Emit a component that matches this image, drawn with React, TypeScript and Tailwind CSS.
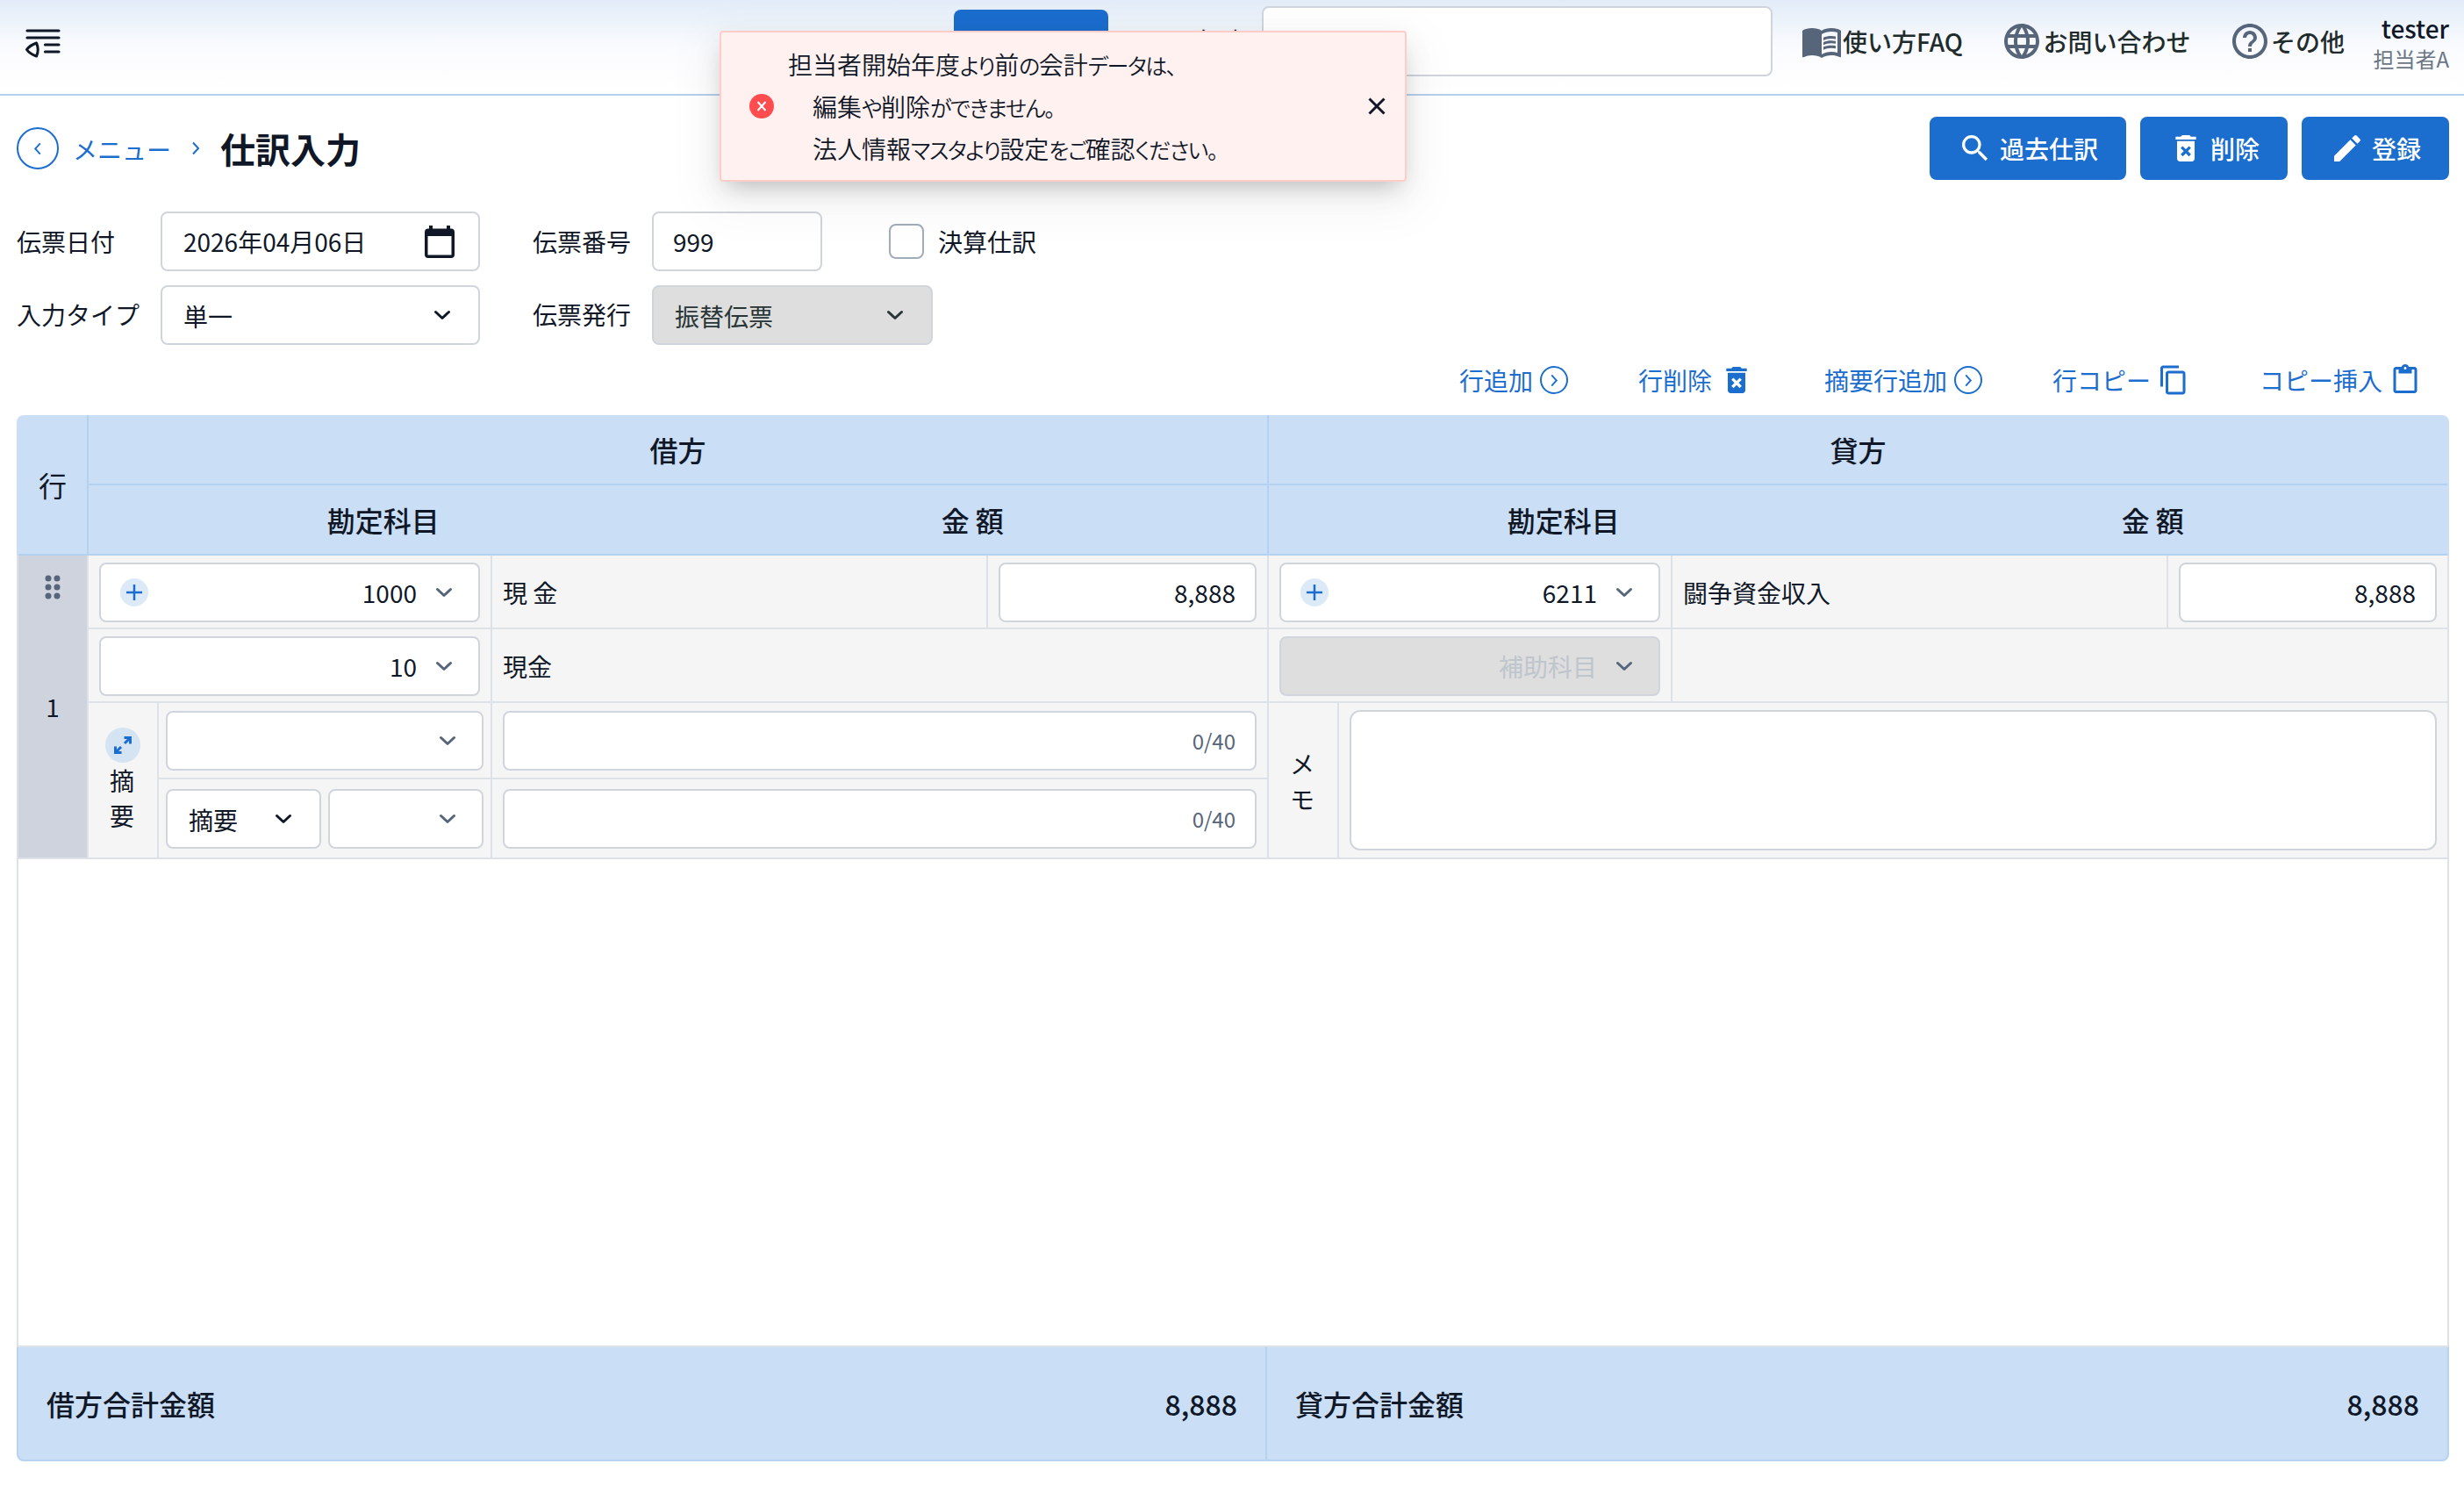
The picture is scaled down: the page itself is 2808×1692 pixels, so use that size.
import clsx from "clsx";
import type { ReactNode } from "react";
import {
  MdContentCopy,
  MdContentPaste,
  MdDeleteForever,
  MdEdit,
  MdHelpOutline,
  MdLanguage,
  MdMenuBook,
  MdSearch,
} from "react-icons/md";

type IconProps = { className?: string };

const ChevronDown = ({ className }: IconProps) => (
  <svg viewBox="0 0 20 12" className={clsx("h-3 w-5 shrink-0", className)} fill="none">
    <path d="M2.5 2.5 10 9.5l7.5-7" stroke="currentColor" strokeWidth="3" strokeLinecap="round" strokeLinejoin="round" />
  </svg>
);

const ChevronSide = ({ className }: IconProps) => (
  <svg viewBox="0 0 10 16" className={clsx("h-4 w-2.5 shrink-0", className)} fill="none">
    <path d="M2 1.5 8 8l-6 6.5" stroke="currentColor" strokeWidth="2" />
  </svg>
);

const FoldIcon = () => (
  <svg viewBox="0 0 40 34" className="h-[34px] w-10" fill="none" stroke="#101828" strokeWidth="3.2" strokeLinecap="round" strokeLinejoin="round">
    <path d="M2 2h36M2 10h36M22.5 18H38M22.5 26H38" />
    <path d="M12.5 16q3.5 7.500 0 15Q4.500 28 1.500 23.500 4.500 19 12.500 16Z" strokeWidth="3" />
  </svg>
);

const CalendarIcon = () => (
  <svg viewBox="0 0 34 37" className="h-[37px] w-[34px]" fill="#101828">
    <path
      fillRule="evenodd"
      d="M5 0h4v3.500h16V0h4v3.500h1a4 4 0 0 1 4 4V33a4 4 0 0 1-4 4H4a4 4 0 0 1-4-4V7.500a4 4 0 0 1 4-4h1V0ZM3.500 12v21.500h27V12Z"
    />
  </svg>
);

const CircleChevron = () => (
  <span className="flex size-8 items-center justify-center rounded-full border-2 border-[#1b6dce]">
    <ChevronSide className="h-[15px] w-2" />
  </span>
);

const ExpandIcon = () => (
  <svg viewBox="0 0 22 22" className="size-[22px]" fill="none" stroke="#1b6dce" strokeWidth="3">
    <path d="M12.500 2.500h7v7M19.500 2.500l-6.500 6.500M9.500 19.500h-7v-7M2.500 19.500 9 13" />
  </svg>
);

const DragDots = () => (
  <svg viewBox="0 0 18 28" className="h-7 w-[18px]" fill="#56657a">
    {[4, 14, 24].map((y) => (
      <g key={y}>
        <circle cx="4" cy={y} r="3.500" />
        <circle cx="14" cy={y} r="3.500" />
      </g>
    ))}
  </svg>
);

const Field = ({ className, children }: { className?: string; children?: ReactNode }) => (
  <div className={clsx("flex h-[68px] items-center rounded-lg border-2 border-[#d0d5dd]", className)}>
    {children}
  </div>
);

const AccountField = ({
  value,
  addable = false,
  disabled = false,
}: {
  value: string;
  addable?: boolean;
  disabled?: boolean;
}) => (
  <Field className={clsx("w-[434px] pr-[29px] pl-[22px]", disabled ? "bg-[#dedede]" : "bg-white")}>
    {addable && (
      <span className="flex size-8 items-center justify-center rounded-full bg-[#dceaf8]">
        <svg viewBox="0 0 18 18" className="size-[18px]" stroke="#1b6dce" strokeWidth="2.500">
          <path d="M9 0v18M0 9h18" />
        </svg>
      </span>
    )}
    <span className={clsx("ml-auto", disabled && "text-[#bfc5cd]")}>{value}</span>
    <ChevronDown className="ml-[21px] text-[#56657a]" />
  </Field>
);

const HeaderButton = ({ icon, label }: { icon: ReactNode; label: string }) => (
  <button type="button" className="flex h-[72px] items-center gap-2 rounded-lg bg-[#1b6dce] px-8 font-medium text-white">
    {icon}
    <span>{label}</span>
  </button>
);

const SideHeader = ({ title }: { title: string }) => (
  <div>
    <div className="flex h-20 items-center justify-center border-b-2 border-[#b5d1f0] pb-px">{title}</div>
    <div className="grid h-20 grid-cols-2 items-center border-b-2 border-[#b5d1f0] pb-px text-center">
      <span>勘定科目</span>
      <span>金 額</span>
    </div>
  </div>
);

const AccountRows = ({
  code,
  name,
  sub,
  subName,
}: {
  code: string;
  name: string;
  sub?: string;
  subName?: string;
}) => (
  <>
    <div className="flex h-[84px] border-b-2 border-[#dde1e8]">
      <div className="w-[460px] border-r-2 border-[#dde1e8] px-3 pt-2">
        <AccountField value={code} addable />
      </div>
      <div className="flex flex-1 items-center px-3 pt-px">{name}</div>
      <div className="w-80 border-l-2 border-[#dde1e8] px-3 pt-2">
        <Field className="justify-end bg-white pr-[22px]">8,888</Field>
      </div>
    </div>
    <div className="flex h-[84px] border-b-2 border-[#dde1e8]">
      <div className="w-[460px] border-r-2 border-[#dde1e8] px-3 pt-2">
        <AccountField value={sub ?? "補助科目"} disabled={!sub} />
      </div>
      <div className="flex flex-1 items-center px-3 pt-px">{subName}</div>
    </div>
  </>
);

const CounterField = () => (
  <Field className="w-full justify-end bg-white pr-[22px] text-2xl text-[#56657a]">0/40</Field>
);

// kana is set slightly smaller and tighter than kanji inside the toast
const Kana = ({ children }: { children: ReactNode }) => (
  <span className="text-[25px] leading-none tracking-[-1.5px]">{children}</span>
);

const Toast = () => (
  <div className="absolute top-[35px] left-[820px] flex h-[172px] w-[783px] items-center rounded border-2 border-[#ffccc7] bg-[#fff1f0] pr-[22px] pl-8 shadow-[0_12px_32px_rgba(0,0,0,0.08),0_12px_24px_-12px_rgba(0,0,0,0.22),0_18px_56px_16px_rgba(0,0,0,0.04)]">
    <svg viewBox="0 0 28 28" className="size-7" fill="none">
      <circle cx="14" cy="14" r="14" fill="#ff4d4f" />
      <path d="m9.500 9 9 10M18.500 9l-9 10" stroke="#fff" strokeWidth="2" />
    </svg>
    <div className="ml-4 pb-px leading-[48px] font-[350] [font-feature-settings:'palt']">
      <p className="h-12">
        担当者開始年度<Kana>より</Kana>前<Kana>の</Kana>会計<Kana>データは、</Kana>
      </p>
      <p className="h-12 pl-7">
        編集<Kana>や</Kana>削除<Kana>ができません。</Kana>
      </p>
      <p className="h-12 pl-7">
        法人情報<Kana>マスタより</Kana>設定<Kana>をご</Kana>確認<Kana>ください。</Kana>
      </p>
    </div>
    <svg viewBox="0 0 20 20" className="ml-auto size-5" fill="none">
      <path d="m1.500 1.500 17 17M18.500 1.500l-17 17" stroke="#101828" strokeWidth="3" />
    </svg>
  </div>
);

const App = () => {
  return (
    <div className="relative flex h-[1692px] w-[2808px] flex-col bg-white font-['Noto_Sans_CJK_JP',sans-serif] text-[28px] leading-10 text-[#101828]">
      <header className="flex h-[109px] items-start border-b-2 border-[#b5d0ed] bg-linear-to-b from-[#e2ecf8] via-[#fafbfe] to-white pr-[17px] pl-[29px]">
        <div className="mt-[33px]">
          <FoldIcon />
        </div>
        <div className="mt-[11px] ml-[1018px] h-[72px] w-44 rounded-lg bg-[#1b6dce]" />
        <div className="mt-[26px] ml-[100px] w-[75px] tracking-[2px] whitespace-nowrap">年度</div>
        <div className="mt-[7px] h-20 w-[582px] rounded-lg border-2 border-[#d0d5dd] bg-white" />
        <nav className="mt-[23px] ml-8 flex gap-[43.500px] font-medium text-[#1f2c2b]">
          <a className="flex h-12 items-center">
            <MdMenuBook className="size-12 text-[#56657a]" />
            使い方FAQ
          </a>
          <a className="flex h-12 items-center">
            <MdLanguage className="size-12 text-[#56657a]" />
            お問い合わせ
          </a>
          <a className="flex h-12 items-center">
            <MdHelpOutline className="size-12 text-[#56657a]" />
            その他
          </a>
        </nav>
        <div className="mt-3.5 ml-auto text-right">
          <p className="leading-9 font-medium">tester</p>
          <p className="text-2xl leading-[34px] text-[#6b7686]">担当者A</p>
        </div>
      </header>

      <div className="mt-6 flex h-[72px] items-center pr-[17px] pl-[19px]">
        <span className="flex size-12 items-center justify-center rounded-full border-2 border-[#1b6dce] text-[#1b6dce]">
          <ChevronSide className="h-[15px] w-2 rotate-180" />
        </span>
        <a className="ml-4 pt-0.5 text-[#1b6dce]">メニュー</a>
        <ChevronSide className="ml-[23px] text-[#1b6dce]" />
        <h1 className="ml-[23px] pb-px text-[40px] font-bold">仕訳入力</h1>
        <div className="ml-auto flex gap-4">
          <HeaderButton icon={<MdSearch className="size-10" />} label="過去仕訳" />
          <HeaderButton icon={<MdDeleteForever className="size-10" />} label="削除" />
          <HeaderButton icon={<MdEdit className="size-10" />} label="登録" />
        </div>
      </div>

      <div className="mt-9 flex flex-col gap-4 pl-[19px]">
        <div className="flex items-center">
          <span className="w-[164px]">伝票日付</span>
          <Field className="w-[364px] justify-between bg-white pr-[27px] pl-6">
            <span>2026年04月06日</span>
            <CalendarIcon />
          </Field>
          <span className="ml-[60px] w-[136px]">伝票番号</span>
          <Field className="w-[194px] bg-white pl-[22px]">999</Field>
          <span className="ml-[76px] size-10 rounded-lg border-2 border-[#a2abba] bg-white" />
          <span className="ml-4">決算仕訳</span>
        </div>
        <div className="flex items-center">
          <span className="w-[164px] pb-0.5">入力タイプ</span>
          <Field className="w-[364px] justify-between bg-white pr-[31px] pl-6">
            <span className="pt-px">単一</span>
            <ChevronDown />
          </Field>
          <span className="ml-[60px] w-[136px] pb-0.5">伝票発行</span>
          <Field className="w-80 justify-between bg-[#dedede] pr-[31px] pl-6 text-[#2a3536]">
            <span className="pt-px">振替伝票</span>
            <ChevronDown />
          </Field>
        </div>
      </div>

      <div className="mt-5 mr-[49px] flex h-10 items-center justify-end gap-20 text-[#1b6dce]">
        <a className="flex items-center gap-2">
          行追加
          <CircleChevron />
        </a>
        <a className="flex items-center gap-2">
          行削除
          <MdDeleteForever className="size-10" />
        </a>
        <a className="flex items-center gap-2">
          摘要行追加
          <CircleChevron />
        </a>
        <a className="flex items-center gap-2">
          行コピー
          <MdContentCopy className="size-9" />
        </a>
        <a className="flex items-center gap-2">
          コピー挿入
          <MdContentPaste className="size-9" />
        </a>
      </div>

      <main className="mt-5 mr-[17px] ml-[19px] flex h-[1192px] flex-col">
        <div className="flex h-40 rounded-t-lg bg-[#cadef6] px-0.5 text-[32px] font-medium">
          <div className="flex w-20 items-center justify-center border-r-2 border-b-2 border-r-[#b5d1f0] border-b-[#b5d1f0] font-normal">
            行
          </div>
          <div className="w-[1345px] border-r-2 border-[#b5d1f0]">
            <SideHeader title="借方" />
          </div>
          <div className="flex-1">
            <SideHeader title="貸方" />
          </div>
        </div>

        <div className="flex-1 border-x-2 border-b-2 border-[#dde1e8]">
          <div className="flex h-[346px] border-b-2 border-[#dde1e8] bg-[#f5f5f5]">
            <div className="flex w-20 flex-col items-center border-r-2 border-[#dde1e8] bg-[#ced3dd] pt-[22px]">
              <DragDots />
              <span className="mt-[102px]">1</span>
            </div>

            <div className="w-[1345px] border-r-2 border-[#dde1e8]">
              <AccountRows code="1000" name="現 金" sub="10" subName="現金" />
              <div className="flex h-44">
                <div className="flex w-20 flex-col items-center border-r-2 border-[#dde1e8] pt-7">
                  <span className="flex size-10 items-center justify-center rounded-full bg-[#d5e4f2]">
                    <ExpandIcon />
                  </span>
                  <span className="pr-0.5">摘</span>
                  <span className="pr-0.5">要</span>
                </div>
                <div className="flex-1">
                  <div className="flex h-[87px] border-b-2 border-[#dde1e8]">
                    <div className="w-[380px] border-r-2 border-[#dde1e8] px-2 pt-[9px]">
                      <Field className="w-[362px] justify-end bg-white pr-[29px]">
                        <ChevronDown className="text-[#56657a]" />
                      </Field>
                    </div>
                    <div className="flex-1 px-3 pt-[9px]">
                      <CounterField />
                    </div>
                  </div>
                  <div className="flex h-[89px]">
                    <div className="flex w-[380px] gap-2 border-r-2 border-[#dde1e8] px-2 pt-[11px]">
                      <Field className="w-[177px] shrink-0 justify-between bg-white pr-[31px] pl-6">
                        <span className="pt-px">摘要</span>
                        <ChevronDown />
                      </Field>
                      <Field className="w-[177px] shrink-0 justify-end bg-white pr-[29px]">
                        <ChevronDown className="text-[#56657a]" />
                      </Field>
                    </div>
                    <div className="flex-1 px-3 pt-[11px]">
                      <CounterField />
                    </div>
                  </div>
                </div>
              </div>
            </div>

            <div className="flex-1">
              <AccountRows code="6211" name="闘争資金収入" />
              <div className="flex h-44">
                <div className="flex w-20 flex-col items-center justify-center border-r-2 border-[#dde1e8] pt-px pr-0.5">
                  <span>メ</span>
                  <span>モ</span>
                </div>
                <div className="flex-1 px-3 pt-2">
                  <div className="h-40 rounded-xl border-2 border-[#d0d5dd] bg-white" />
                </div>
              </div>
            </div>
          </div>
        </div>

        <footer className="flex h-[130px] rounded-b-lg border-x-2 border-b-2 border-[#b8d2f1] bg-[#cadef6] text-[32px] font-medium">
          <div className="flex w-[1423px] items-center justify-between border-r-2 border-[#b8d2f1] px-8">
            <span>借方合計金額</span>
            <span>8,888</span>
          </div>
          <div className="flex flex-1 items-center justify-between px-8">
            <span>貸方合計金額</span>
            <span>8,888</span>
          </div>
        </footer>
      </main>

      <Toast />
    </div>
  );
};

export default App;
